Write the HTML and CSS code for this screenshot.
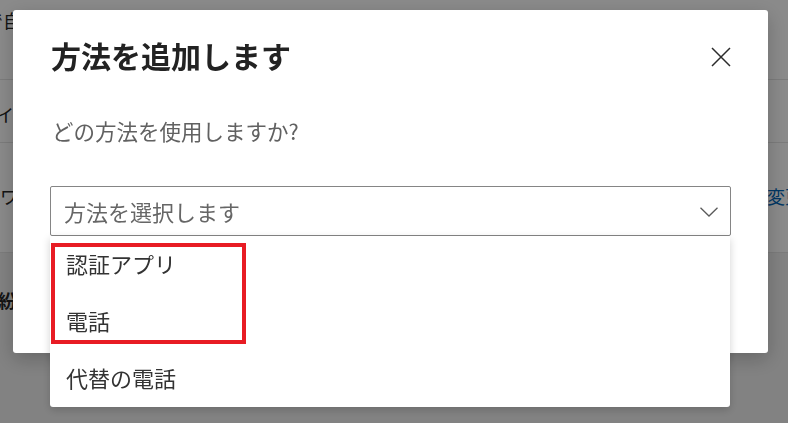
FILE: index.html
```html
<!DOCTYPE html>
<html lang="ja">
<head>
  <meta charset="UTF-8">
  <meta name="viewport" content="width=device-width, initial-scale=1.0">
  <title>方法を追加します</title>
  <link rel="stylesheet" href="styles.css">
</head>
<body>
  <div class="page">
    <div class="row row-a"><span class="cut">で自動</span></div>
    <div class="row row-b"><span class="cut">イン</span></div>
    <div class="row row-c"><span class="cut">ワード</span><a class="link" href="#">変更</a></div>
    <div class="row row-d"><span class="cut">紛失</span></div>
  </div>

  <div class="overlay">
    <div class="modal" role="dialog">
      <div class="modal-head">
        <h2>方法を追加します</h2>
        <button class="close" aria-label="閉じる">
          <svg width="20" height="20" viewBox="0 0 20 20"><path d="M1 1 L19 19 M19 1 L1 19" stroke="#2b2b2b" stroke-width="1.5" fill="none"/></svg>
        </button>
      </div>
      <p class="question">どの方法を使用しますか?</p>

      <div class="picker">
        <div class="select">
          <span>方法を選択します</span>
          <svg width="18" height="10" viewBox="0 0 18 10"><path d="M0.5 0.8 L9 9 L17.5 0.8" stroke="#5a5a5a" stroke-width="1.3" fill="none"/></svg>
        </div>
        <ul class="options">
          <li>認証アプリ</li>
          <li>電話</li>
          <li>代替の電話</li>
        </ul>
        <div class="mark"></div>
      </div>
    </div>
  </div>
</body>
</html>
```

FILE: styles.css
```css
* { margin: 0; padding: 0; box-sizing: border-box; }

body {
  font-family: "Noto Sans CJK JP", "Noto Sans", sans-serif;
  background: #f1f1f1; color: #333;
  width: 788px; height: 423px; overflow: hidden;
}

/* page behind the dialog */
.page { width: 788px; }

.row {
  display: flex; justify-content: space-between; align-items: flex-start;
  background: #fff; border-bottom: 1px solid #e4e4e4;
  font-size: 18px; line-height: 24px; color: #262626;
}

.row-a { height: 80px; padding-top: 8px; }
.row-a .cut { margin-left: -15px; }
.row-b { height: 63px; padding-top: 22px; }
.row-b .cut { margin-left: -4px; }
.row-c { height: 110px; padding-top: 41px; }
.row-c .cut { margin-left: 0; }
.row-d { height: 170px; padding-top: 35px; background: #f0f0f0; border: none; }
.row-d .cut { margin-left: -2px; font-weight: 700; }

.link { color: #0067b8; text-decoration: none; margin-right: -15px; }

/* dialog */
.overlay {
  position: fixed; top: 0; left: 0; right: 0; bottom: 0;
  background: rgba(0, 0, 0, 0.46);
  padding: 10px 0 0 13px;
}

.modal {
  width: 755px; height: 343px;
  background: #fff; border-radius: 3px;
  box-shadow: 0 6px 20px rgba(0, 0, 0, 0.22);
  padding: 25px 37px 0 37px;
}

.modal-head {
  display: flex; justify-content: space-between; align-items: center;
  height: 40px;
}

.modal-head h2 {
  font-size: 30px; line-height: 40px; font-weight: 700; color: #222;
  padding-left: 1px;
}

.close {
  background: none; border: none; width: 20px; height: 20px;
  margin-top: 4px; cursor: pointer; display: flex;
}

.question {
  margin-top: 41px;
  font-size: 21.5px; line-height: 30px; color: #616161;
  padding-left: 2px;
}

.picker { position: relative; margin-top: 40px; }

.select {
  height: 50px; border: 1px solid #858585; border-radius: 2px;
  display: flex; justify-content: space-between; align-items: center;
  padding: 0 12px 0 13px;
  font-size: 22px; color: #666;
}

.select svg { margin-top: 1px; }

.options {
  position: absolute; top: 100%; left: 0; width: 680px;
  list-style: none; background: #fff;
  box-shadow: 0 3px 8px rgba(0, 0, 0, 0.18);
  border-radius: 0 0 3px 3px;
}

.options li {
  height: 57px; display: flex; align-items: center;
  padding: 0 0 4px 16px; font-size: 22px; color: #333;
}

.mark {
  position: absolute; left: 1px; top: 57px;
  width: 195px; height: 101px;
  border: 4px solid #e81c24;
}
```
